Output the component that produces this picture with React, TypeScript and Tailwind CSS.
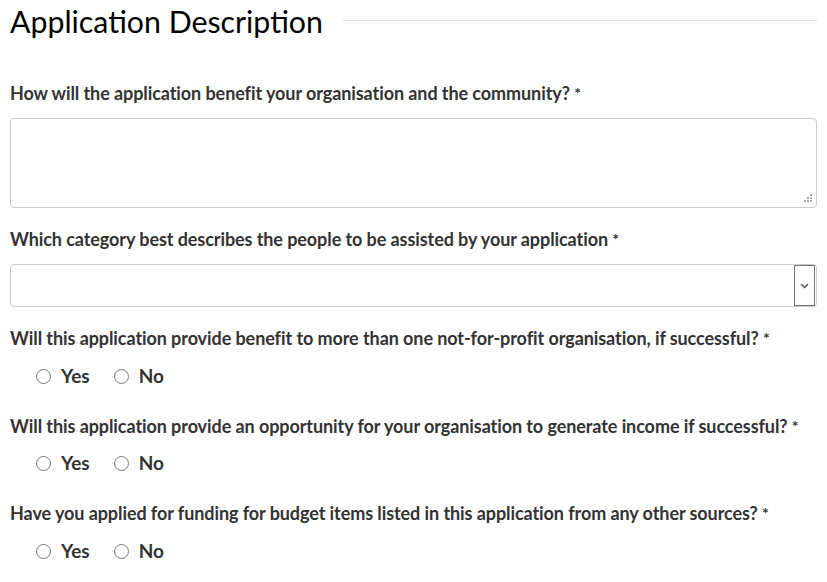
import React from 'react';

const YesNo: React.FC<{ name: string }> = ({ name }) => (
  <div className="flex items-center pl-[26px] h-[24px]">
    <label className="flex items-center gap-[10px]">
      <span className="w-[15px] h-[15px] rounded-full border border-[#777] bg-white" />
      <span className="text-[19px] font-bold text-[#333]">Yes</span>
    </label>
    <label className="flex items-center gap-[10px] ml-[24px]">
      <span className="w-[15px] h-[15px] rounded-full border border-[#777] bg-white" />
      <span className="text-[19px] font-bold text-[#333]">No</span>
    </label>
    <input type="hidden" name={name} />
  </div>
);

const Label: React.FC<{ text: string }> = ({ text }) => (
  <div className="text-[18px] font-bold text-[#333] leading-[24px] tracking-[-0.08px]">
    {text} <span className="text-[16px] align-top">*</span>
  </div>
);

export default function App() {
  return (
    <div className="bg-white w-[827px] h-[582px] px-[10px] font-['Lato','Noto_Sans',sans-serif] overflow-hidden">
      <div className="flex items-center gap-[20px] h-[42px]">
        <h1 className="text-[30.3px] text-black leading-[42px] whitespace-nowrap">Application Description</h1>
        <div className="flex-1 h-px bg-[#ddd] mt-[-2px]" />
      </div>

      <div className="mt-[39px]">
        <Label text="How will the application benefit your organisation and the community?" />
      </div>
      <div className="mt-[13px] h-[90px] border border-[#ccc] rounded-[4px] relative">
        <svg className="absolute right-[3px] bottom-[3px]" width="10" height="10" viewBox="0 0 10 10">
          <rect x="7" y="0" width="2" height="2" fill="#aaa" />
          <rect x="4" y="3" width="2" height="2" fill="#aaa" />
          <rect x="7" y="3" width="2" height="2" fill="#aaa" />
          <rect x="1" y="6" width="2" height="2" fill="#aaa" />
          <rect x="4" y="6" width="2" height="2" fill="#aaa" />
          <rect x="7" y="6" width="2" height="2" fill="#aaa" />
        </svg>
      </div>

      <div className="mt-[19px]">
        <Label text="Which category best describes the people to be assisted by your application" />
      </div>
      <div className="mt-[13px] h-[43px] border border-[#ccc] rounded-[4px] flex justify-end">
        <div className="w-[21px] mr-[1px] border border-[#777] flex items-center justify-center">
          <svg width="9" height="6" viewBox="0 0 9 6">
            <path d="M1 1 L4.5 4.5 L8 1" fill="none" stroke="#555" strokeWidth="1.5" />
          </svg>
        </div>
      </div>

      <div className="mt-[19px]">
        <Label text="Will this application provide benefit to more than one not-for-profit organisation, if successful?" />
      </div>
      <div className="mt-[14px]">
        <YesNo name="q3" />
      </div>

      <div className="mt-[26px]">
        <Label text="Will this application provide an opportunity for your organisation to generate income if successful?" />
      </div>
      <div className="mt-[13px]">
        <YesNo name="q4" />
      </div>

      <div className="mt-[26px]">
        <Label text="Have you applied for funding for budget items listed in this application from any other sources?" />
      </div>
      <div className="mt-[14px]">
        <YesNo name="q5" />
      </div>
    </div>
  );
}
